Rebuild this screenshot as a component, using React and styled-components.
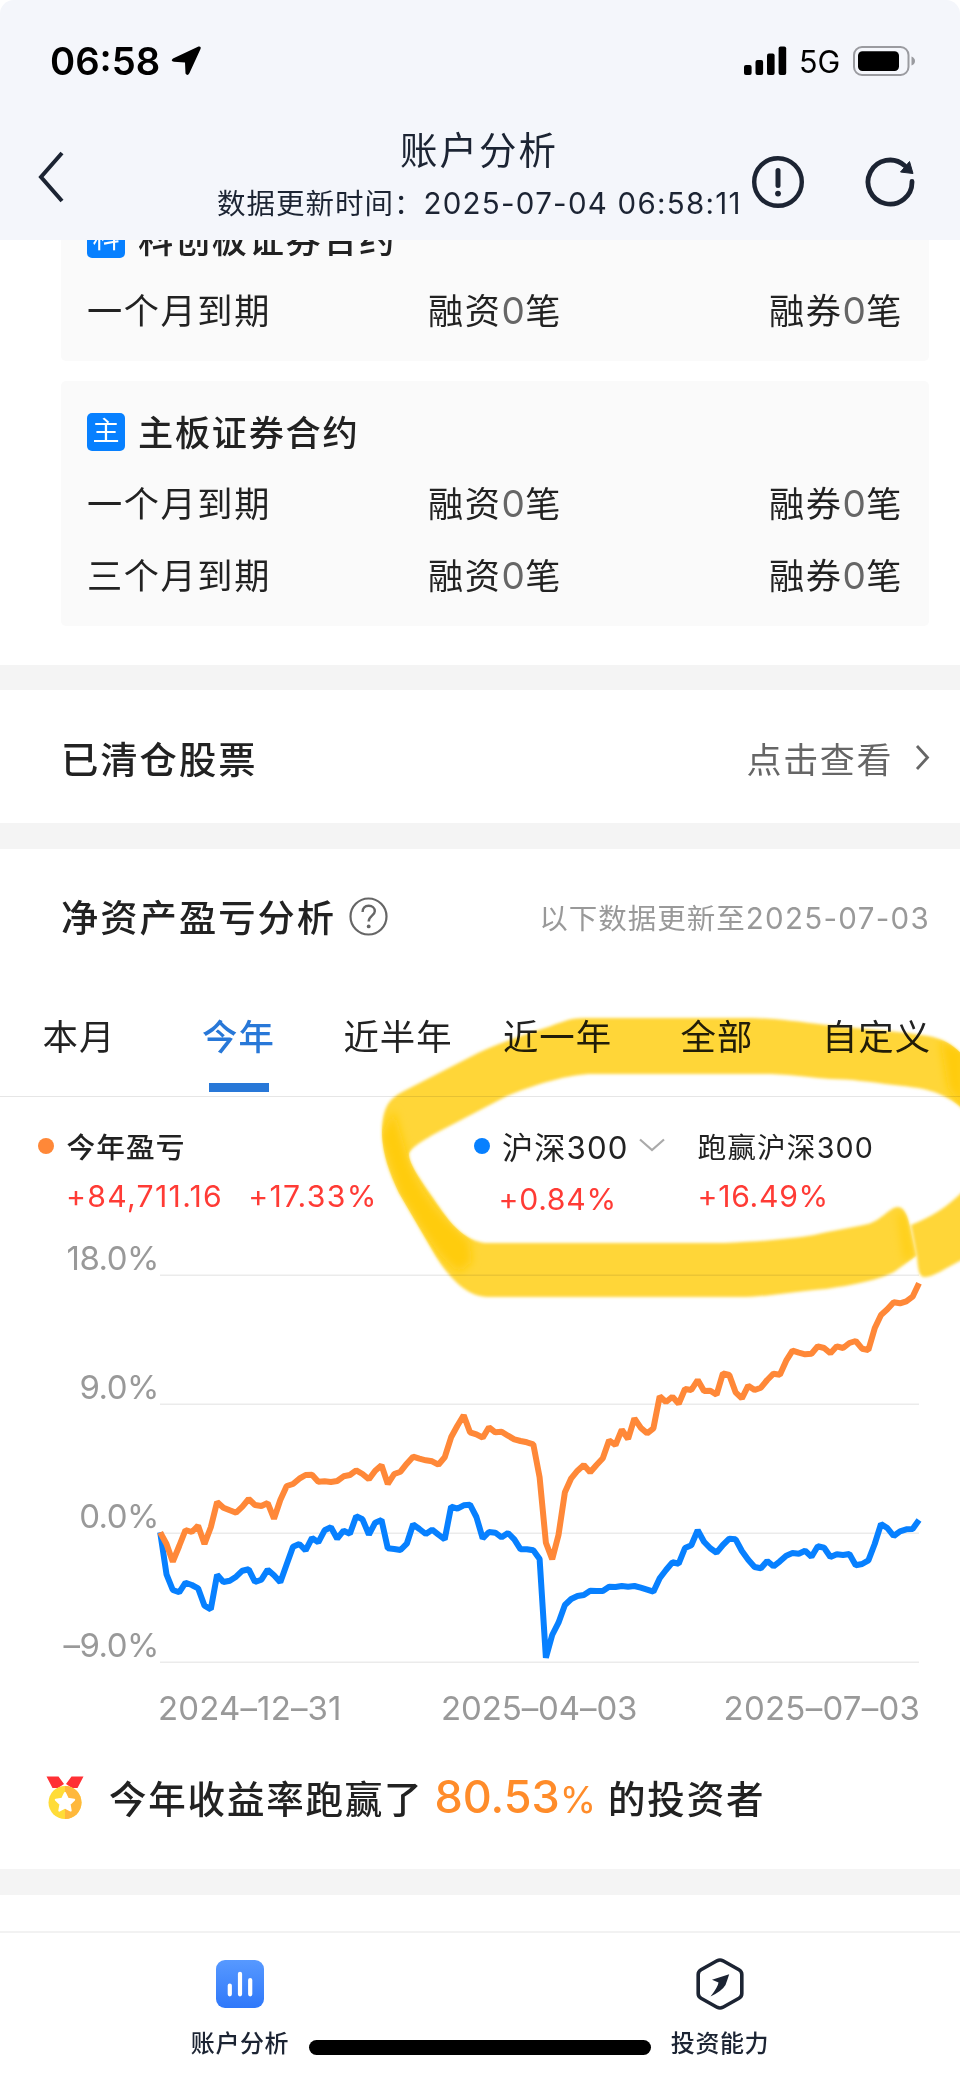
import styled, { createGlobalStyle } from "styled-components";

const contracts = [
  { badge: "科", title: "科创板证券合约", periods: ["一个月到期"] },
  { badge: "主", title: "主板证券合约", periods: ["一个月到期", "三个月到期"] },
];

const tabs = ["本月", "今年", "近半年", "近一年", "全部", "自定义"];

// daily levels, three units to a pixel, measured down from the chart's top
const accountLevels = [
  877, 912, 965, 918, 870, 876, 857, 912, 862, 786, 803, 811, 818, 800, 777,
  795, 798, 789, 836, 780, 738, 732, 716, 705, 704, 725, 724, 726, 723, 709,
  705, 691, 702, 718, 692, 676, 732, 702, 695, 671, 650, 656, 661, 664, 674,
  652, 592, 557, 526, 577, 583, 593, 562, 577, 575, 587, 598, 603, 607, 613,
  712, 908, 958, 885, 757, 715, 692, 675, 697, 675, 655, 601, 615, 569, 597,
  535, 563, 580, 565, 469, 486, 470, 491, 447, 450, 420, 453, 452, 464, 400,
  405, 457, 475, 437, 450, 443, 420, 401, 404, 362, 332, 338, 343, 341, 319,
  324, 340, 319, 324, 309, 303, 326, 330, 265, 225, 208, 187, 190, 184, 170,
  130,
];

const indexLevels = [
  877, 1003, 1050, 1057, 1028, 1035, 1045, 1097, 1108, 1004, 1026, 1022, 1010,
  992, 988, 1026, 1019, 989, 1006, 1027, 973, 920, 912, 931, 894, 907, 871,
  862, 896, 872, 881, 829, 838, 884, 848, 840, 925, 927, 930, 911, 853, 867,
  882, 869, 884, 898, 800, 806, 796, 794, 831, 895, 876, 878, 892, 879, 898,
  928, 928, 931, 957, 1253, 1185, 1148, 1095, 1077, 1068, 1065, 1052, 1053,
  1053, 1040, 1041, 1038, 1040, 1038, 1043, 1049, 1055, 1015, 990, 967, 971,
  924, 916, 871, 905, 925, 938, 915, 896, 898, 933, 959, 981, 985, 963, 979,
  964, 947, 939, 941, 932, 950, 919, 923, 951, 943, 945, 942, 976, 972, 961,
  912, 852, 864, 888, 874, 868, 867, 840,
];

const toPoints = (levels) =>
  levels
    .map((level, i) => `${(160.2 + i * 6.323).toFixed(1)},${(level / 3).toFixed(1)}`)
    .join(" ");

const gridLines = [
  { label: "18.0%", y: 35.3 },
  { label: "9.0%", y: 164.3 },
  { label: "0.0%", y: 293.3 },
  { label: "–9.0%", y: 422.3 },
];

export default function App() {
  return (
    <>
      <GlobalStyle />
      <Page>
        <Header>
          <StatusBar>
            <Clock>06:58</Clock>
            <LocationIcon />
            <StatusRight>
              <SignalIcon />
              <Network>5G</Network>
              <BatteryIcon />
            </StatusRight>
          </StatusBar>
          <NavBar>
            <BackIcon />
            <NavTitles>
              <NavTitle>账户分析</NavTitle>
              <NavSubtitle>
                数据更新时间：<span>2025-07-04 06:58:11</span>
              </NavSubtitle>
            </NavTitles>
            <NavActions>
              <InfoIcon />
              <RefreshIcon />
            </NavActions>
          </NavBar>
        </Header>

        <Content>
          <ContractList>
            {contracts.map((contract) => (
              <ContractCard key={contract.title}>
                <ContractHeading>
                  <Badge>{contract.badge}</Badge>
                  {contract.title}
                </ContractHeading>
                {contract.periods.map((period) => (
                  <ContractRow key={period}>
                    <span>{period}</span>
                    <span>
                      融资<Count>0</Count>笔
                    </span>
                    <span>
                      融券<Count>0</Count>笔
                    </span>
                  </ContractRow>
                ))}
              </ContractCard>
            ))}
          </ContractList>

          <ClearedRow>
            <SectionTitle>已清仓股票</SectionTitle>
            <ViewLink>
              点击查看
              <svg width="15" height="27" viewBox="0 0 15 27" fill="none">
                <path d="M2 2L12.5 13.5L2 25" stroke="#666" strokeWidth="2.8" />
              </svg>
            </ViewLink>
          </ClearedRow>

          <Analysis>
            <AnalysisHeading>
              <SectionTitle>净资产盈亏分析</SectionTitle>
              <HelpIcon />
              <UpdatedAt>
                以下数据更新至<span>2025-07-03</span>
              </UpdatedAt>
            </AnalysisHeading>
            <Tabs>
              {tabs.map((tab) => (
                <Tab key={tab} $active={tab === "今年"}>
                  {tab}
                </Tab>
              ))}
            </Tabs>
            <Legend>
              <LegendItem>
                <LegendLabel $bold>
                  <Dot $color="#ff8838" />
                  今年盈亏
                </LegendLabel>
                <LegendValues $wide>
                  <span>+84,711.16</span>
                  <span>+17.33%</span>
                </LegendValues>
              </LegendItem>
              <LegendItem>
                <LegendLabel $large>
                  <Dot $color="#0780ff" />
                  沪深300
                  <svg width="26" height="14" viewBox="0 0 26 14" fill="none">
                    <path d="M1 1.5L13 12L25 1.5" stroke="#aaa" strokeWidth="2.2" />
                  </svg>
                </LegendLabel>
                <LegendValues $lower>
                  <span>+0.84%</span>
                </LegendValues>
              </LegendItem>
              <LegendItem>
                <LegendLabel>跑赢沪深300</LegendLabel>
                <LegendValues>
                  <span>+16.49%</span>
                </LegendValues>
              </LegendItem>
            </Legend>
            <ProfitChart />
            <Ranking>
              <MedalIcon />
              <span>今年收益率跑赢了</span>
              <Percent>
                80.53<small>%</small>
              </Percent>
              <span>的投资者</span>
            </Ranking>
            <Marker />
          </Analysis>
        </Content>

        <BottomBar>
          <BottomItem>
            <ChartTabIcon />
            账户分析
          </BottomItem>
          <BottomItem>
            <AbilityTabIcon />
            投资能力
          </BottomItem>
          <HomeIndicator />
        </BottomBar>
      </Page>
    </>
  );
}

function ProfitChart() {
  return (
    <ChartSvg width="960" height="500" viewBox="0 0 960 500">
      {gridLines.map(({ label, y }) => (
        <g key={label}>
          <line x1="160" x2="919" y1={y} y2={y} stroke="#ebebeb" strokeWidth="1.4" />
          <text x="159" y={y - 5.5} textAnchor="end">
            {label}
          </text>
        </g>
      ))}
      <polyline points={toPoints(indexLevels)} stroke="#0780ff" />
      <polyline points={toPoints(accountLevels)} stroke="#ff8838" />
      <text x="158" y="479.5" textLength="183">2024–12–31</text>
      <text x="441" y="479.5" textLength="196">2025–04–03</text>
      <text x="723.5" y="479.5" textLength="196">2025–07–03</text>
    </ChartSvg>
  );
}

// hand-drawn highlighter ring, its right side runs off the page
function Marker() {
  return (
    <MarkerSvg width="960" height="320" viewBox="0 1000 960 320">
      <defs>
        <filter id="soft" x="-5%" y="-5%" width="110%" height="110%">
          <feGaussianBlur stdDeviation="1.6" />
        </filter>
        <filter id="softer" x="-20%" y="-20%" width="140%" height="140%">
          <feGaussianBlur stdDeviation="4" />
        </filter>
        <clipPath id="ring">
          <path d={ringPath} />
        </clipPath>
      </defs>
      <g fill="#ffd638" filter="url(#soft)">
        <path d={ringPath} />
        <path d="M970 1184C950 1206 932 1217 911 1225L917 1256C918 1270 919 1278 926 1277C936 1276 948 1266 970 1256Z" />
      </g>
      <g clipPath="url(#ring)">
        <g fill="#ffcc08" filter="url(#softer)">
          <path d="M394 1110L400 1130L409 1160C417 1183 432 1205 447 1220L470 1242L472 1262L460 1272C446 1266 432 1246 399 1193L380 1137Z" />
          <path d="M940 1040L965 1050V1110L948 1088Z" />
          <path d="M897 1212L906 1214L914 1256L904 1262Z" opacity=".6" />
        </g>
      </g>
    </MarkerSvg>
  );
}

const ringPath =
  "M970 1064C958 1048 948 1041 933 1037C910 1032 860 1029 826 1025C795 1021 775 1018 745 1018H585C568 1018 560 1023 545 1028C520 1036 500 1043 478 1053L402 1092C388 1100 382 1108 382 1135C383 1155 389 1172 399 1193L435 1255C448 1276 466 1297 488 1297H745C775 1296 795 1291 826 1289C860 1284 880 1279 894 1272L916 1256L911 1232C908 1215 904 1207 898 1207C890 1207 882 1220 868 1224C850 1228 835 1230 814 1235C790 1239 755 1242 724 1243H486C470 1242 455 1229 445 1215C430 1193 408 1165 409 1154C410 1148 425 1139 440 1131L505 1097C535 1084 570 1074 593 1074H771C795 1075 815 1078 830 1079C850 1079 870 1082 894 1085C920 1088 945 1089 970 1116Z";

function LocationIcon() {
  return (
    <svg width="32" height="32" viewBox="0 0 32 32">
      <path
        d="M28.5 1.5Q31.5 1 30.5 4L19.5 28Q17.5 31.5 15.5 28.5L15 17.5L4 16.8Q0 16 3 13.5Z"
        fill="#000"
      />
    </svg>
  );
}

function SignalIcon() {
  return (
    <svg width="43" height="30" viewBox="0 0 43 30">
      <rect x="0" y="19" width="7.6" height="10" rx="2" />
      <rect x="11.5" y="14" width="7.6" height="15" rx="2" />
      <rect x="23" y="7.5" width="7.6" height="21.5" rx="2" />
      <rect x="34.6" y="0.5" width="7.6" height="28.5" rx="2" />
    </svg>
  );
}

function BatteryIcon() {
  return (
    <svg width="63" height="30" viewBox="0 0 63 30">
      <rect x="1" y="1" width="54.5" height="28" rx="8" fill="none" stroke="#9a9ba0" strokeWidth="2" />
      <rect x="5" y="5.2" width="41" height="19.8" rx="4.5" />
      <path d="M58.5 10.5Q62 12 62 15T58.5 19.5Z" fill="#9a9ba0" />
    </svg>
  );
}

function BackIcon() {
  return (
    <svg width="26" height="52" viewBox="0 0 26 52" fill="none">
      <path d="M24 2L3 26L24 50" stroke="#1c2433" strokeWidth="4" />
    </svg>
  );
}

function InfoIcon() {
  return (
    <svg width="54" height="54" viewBox="0 0 54 54" fill="none">
      <circle cx="27" cy="27" r="23.8" stroke="#1c2433" strokeWidth="4.4" />
      <path d="M27 15.5V30.5" stroke="#1c2433" strokeWidth="5" strokeLinecap="round" />
      <circle cx="27" cy="38.6" r="2.9" fill="#1c2433" />
    </svg>
  );
}

function RefreshIcon() {
  return (
    <svg width="54" height="54" viewBox="0 0 54 54" fill="none">
      <path
        d="M49 26.5A22 22 0 1 1 41.5 10.5"
        stroke="#1c2433"
        strokeWidth="4.8"
        strokeLinecap="round"
      />
      <path d="M46.5 6.5L50 18.5L37.5 17Z" fill="#1c2433" stroke="#1c2433" strokeLinejoin="round" />
    </svg>
  );
}

function HelpIcon() {
  return (
    <svg width="39" height="39" viewBox="0 0 39 39" fill="none" stroke="#666">
      <circle cx="19.5" cy="19.5" r="18" strokeWidth="2.2" />
      <path
        d="M13.6 15C13.6 11 16 8.8 19.7 8.8S25.8 11 25.8 14.2C25.8 18.5 19.7 19 19.7 24.5"
        strokeWidth="2.4"
      />
      <circle cx="19.7" cy="29.4" r="1.9" fill="#666" stroke="none" />
    </svg>
  );
}

function MedalIcon() {
  return (
    <svg width="38" height="44" viewBox="0 0 38 44">
      <path d="M0.5 0.5H12.5L18 8L12 12H6.5Z M25.5 0.5H37.5L31.5 12H26L20 8Z" fill="#ff3034" />
      <circle cx="19" cy="26.5" r="16.5" fill="#ffdc38" />
      <path d="M19 10A16.5 16.5 0 0 1 19 43Z" fill="#ffb83c" />
      <path
        d="M19 17L21.8 22.8L28.2 23.7L23.6 28.2L24.7 34.6L19 31.6L13.3 34.6L14.4 28.2L9.8 23.7L16.2 22.8Z"
        fill="#fff"
        stroke="#fff"
        strokeWidth="2"
        strokeLinejoin="round"
      />
    </svg>
  );
}

function ChartTabIcon() {
  return (
    <svg width="52" height="52" viewBox="0 0 52 52">
      <defs>
        <linearGradient id="tile" x1="0" x2="0" y1="0" y2="1">
          <stop offset="0" stopColor="#5799ff" />
          <stop offset="1" stopColor="#2f78fa" />
        </linearGradient>
      </defs>
      <rect x="2" y="2" width="48" height="48" rx="9" fill="url(#tile)" />
      <path
        d="M15.8 27.5V36.3M26 15.8V36.3M36.2 22V36.3"
        stroke="#fff"
        strokeWidth="4.2"
        strokeLinecap="round"
      />
    </svg>
  );
}

function AbilityTabIcon() {
  return (
    <svg width="52" height="52" viewBox="0 0 52 52">
      <path
        d="M23 2.8Q26 1.2 29 2.8L45 11.8Q47.8 13.4 47.8 16.5V35.5Q47.8 38.6 45 40.2L29 49.2Q26 50.8 23 49.2L7 40.2Q4.2 38.6 4.2 35.5V16.5Q4.2 13.4 7 11.8Z"
        fill="none"
        stroke="#1c2433"
        strokeWidth="3.6"
      />
      <path d="M35.2 16.2L18 21.8L24.5 24.5Q24 29 16.5 38.5Q28 33 31.5 27Q33 23 35.2 16.2Z" fill="#1c2433" />
    </svg>
  );
}

const GlobalStyle = createGlobalStyle`
  body {
    margin: 0;
    background: #fff;
    color: #222;
    font-family: Inter, "Noto Sans CJK SC", sans-serif;
  }

  svg {
    display: block;
    flex-shrink: 0;
  }
`;

const Page = styled.main`
  display: flex;
  flex-direction: column;
  width: 960px;
  height: 2079px;
  overflow: hidden;
`;

const Header = styled.header`
  height: 240px;
  flex-shrink: 0;
  color: #1c2433;
  background: #f4f6fb;
  border-radius: 14px 14px 0 0;
`;

const StatusBar = styled.div`
  display: flex;
  align-items: center;
  box-sizing: border-box;
  height: 122px;
  padding: 0 44px 0 50px;
  color: #000;
`;

const Clock = styled.span`
  width: 120px;
  font-size: 38.2px;
  font-weight: 600;
`;

const StatusRight = styled.div`
  display: flex;
  align-items: center;
  margin-left: auto;
`;

const Network = styled.span`
  width: 40px;
  margin: 0 14px 0 12px;
  font-size: 30.5px;
`;

const NavBar = styled.div`
  display: grid;
  grid-template-columns: 179px 524px 1fr;
  height: 118px;
  padding-left: 38px;

  > svg {
    margin-top: 29px;
  }
`;

const NavTitles = styled.div`
  text-align: center;
`;

const NavTitle = styled.h1`
  margin: 4px 0 0;
  font-size: 37.5px;
  font-weight: 400;
  letter-spacing: 2px;
  line-height: 50px;
`;

const NavSubtitle = styled.p`
  margin: 7px 0 0;
  font-size: 28.5px;
  letter-spacing: 1px;
  line-height: 40px;
  white-space: nowrap;

  span {
    font-size: 29.5px;
    letter-spacing: 1.25px;
  }
`;

const NavActions = styled.div`
  display: flex;
  gap: 58px;
  padding: 33px 0 0 10px;
`;

const Content = styled.div`
  height: 1691px;
  flex-shrink: 0;
  overflow: hidden;
`;

// starts above the header's edge, as if scrolled
const ContractList = styled.section`
  display: flex;
  flex-direction: column;
  gap: 20px;
  height: 477px;
  margin-top: -52px;
  padding: 0 31px 0 61px;
  border-bottom: 25px solid #f4f4f4;
`;

const ContractCard = styled.article`
  padding: 14px 26px 16px;
  background: #fafafa;
  border-radius: 5px;
`;

const ContractHeading = styled.h2`
  display: flex;
  align-items: center;
  gap: 13px;
  height: 71px;
  margin: 0;
  font-size: 35.2px;
  font-weight: 500;
  letter-spacing: 1.7px;
`;

const Badge = styled.span`
  width: 38px;
  height: 38px;
  margin-top: 2px;
  border-radius: 5px;
  color: #fff;
  background: #0780ff;
  font-size: 27px;
  font-weight: 400;
  letter-spacing: 0;
  line-height: 37px;
  text-align: center;
`;

const ContractRow = styled.div`
  display: grid;
  grid-template-columns: 341px 1fr auto;
  align-items: center;
  height: 72px;
  font-size: 35.2px;
  letter-spacing: 1.6px;

  span {
    margin-bottom: 2px;
  }
`;

const Count = styled.span`
  color: #666;
  font-size: 37px;
  letter-spacing: 0.3px;
  line-height: 1;
`;

const ClearedRow = styled.section`
  display: flex;
  align-items: center;
  justify-content: space-between;
  height: 131px;
  padding: 2px 30px 0 61px;
  border-bottom: 26px solid #f4f4f4;
`;

const SectionTitle = styled.h2`
  margin: 0;
  font-size: 37.3px;
  font-weight: 500;
  letter-spacing: 2px;
`;

const ViewLink = styled.span`
  display: flex;
  align-items: center;
  gap: 22px;
  color: #666;
  font-size: 35px;
  letter-spacing: 1.6px;
`;

const Analysis = styled.section`
  position: relative;
  height: 1020px;
  border-bottom: 26px solid #f4f4f4;
`;

const AnalysisHeading = styled.div`
  display: flex;
  align-items: center;
  height: 134px;
  padding: 0 30px 4px 61px;

  svg {
    margin: 1px 0 0 13px;
  }
`;

const UpdatedAt = styled.span`
  margin-left: auto;
  color: #999;
  font-size: 28.5px;
  letter-spacing: 1px;

  span {
    font-size: 29.5px;
    letter-spacing: 1.3px;
  }
`;

const Tabs = styled.nav`
  display: grid;
  grid-template-columns: repeat(6, 159.5px);
  height: 109px;
  border-bottom: 1.5px solid #e6e6e6;
`;

const Tab = styled.span`
  display: flex;
  flex-direction: column;
  align-items: center;
  padding: 26px 1.5px 0 0;
  color: ${({ $active }) => ($active ? "#2878d8" : "#222")};
  font-size: 35.4px;
  font-weight: ${({ $active }) => ($active ? 500 : 400)};
  letter-spacing: 1px;
  line-height: 50px;

  &::after {
    content: "";
    width: 60px;
    height: 9px;
    margin-top: 20px;
    background: ${({ $active }) => ($active ? "#2878d8" : "transparent")};
  }
`;

const Legend = styled.div`
  display: grid;
  grid-template-columns: 435.5px 224px 1fr;
  height: 143px;
  padding: 28px 0 0 38px;
  box-sizing: border-box;
`;

const LegendItem = styled.div``;

const LegendLabel = styled.div`
  display: flex;
  align-items: center;
  height: 40px;
  font-size: ${({ $large }) => ($large ? "31.2px" : "28.7px")};
  font-weight: ${({ $bold }) => ($bold ? 500 : 400)};
  letter-spacing: 1.1px;
  white-space: nowrap;

  svg {
    margin-left: 10px;
  }
`;

const Dot = styled.i`
  width: 16px;
  height: 16px;
  margin: 2px 12.5px 0 0;
  border-radius: 50%;
  background: ${({ $color }) => $color};
`;

const LegendValues = styled.div`
  display: flex;
  gap: 25px;
  margin-top: ${({ $lower }) => ($lower ? "14px" : "11px")};
  padding-left: ${({ $lower }) => ($lower ? "25px" : "0")};
  color: #ff3b35;
  font-size: 30.2px;
  letter-spacing: ${({ $wide }) => ($wide ? "1.3px" : "0.7px")};
  line-height: 40px;

  ${LegendItem}:first-child & {
    padding-left: 28px;
  }
`;

const ChartSvg = styled.svg`
  overflow: visible;

  text {
    fill: #999;
    font-size: 33px;
    letter-spacing: -0.5px;
  }

  polyline {
    fill: none;
    stroke-width: 6;
    stroke-linejoin: bevel;
  }
`;

const Ranking = styled.p`
  display: flex;
  align-items: baseline;
  height: 60px;
  margin: 27px 0 0;
  padding-left: 46px;
  font-size: 37.5px;
  font-weight: 500;
  letter-spacing: 1.8px;
  line-height: 60px;

  svg {
    align-self: center;
    margin: 2px 25px 0 0;
  }
`;

const Percent = styled.span`
  margin: 0 12px 0 11px;
  color: #ff8c2a;
  font-size: 45px;
  letter-spacing: 0;

  small {
    font-size: 37px;
    font-weight: 400;
  }
`;

const MarkerSvg = styled.svg`
  position: absolute;
  top: 151px;
  left: 0;
  mix-blend-mode: multiply;
  pointer-events: none;
`;

const BottomBar = styled.footer`
  position: relative;
  display: grid;
  grid-template-columns: 1fr 1fr;
  height: 148px;
  box-sizing: border-box;
  border-top: 2px solid #f2f2f2;
`;

const BottomItem = styled.div`
  display: flex;
  flex-direction: column;
  align-items: center;
  gap: 19px;
  padding-top: 25px;
  color: #1c2433;
  font-size: 24px;
  font-weight: 500;
  letter-spacing: 0.6px;
  line-height: 30px;
`;

const HomeIndicator = styled.div`
  position: absolute;
  bottom: 24px;
  left: 309px;
  width: 342px;
  height: 15px;
  border-radius: 8px;
  background: #000;
`;
